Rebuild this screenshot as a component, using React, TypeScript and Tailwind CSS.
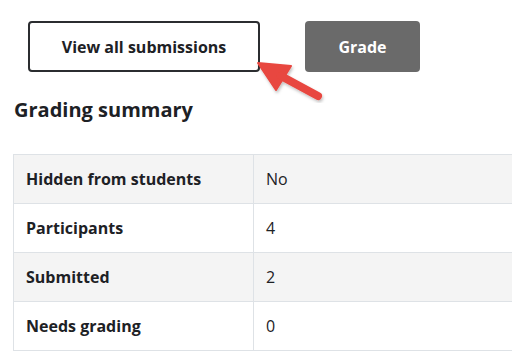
const rows = [
    { label: 'Hidden from students', value: 'No', shaded: true },
    { label: 'Participants', value: '4', shaded: false },
    { label: 'Submitted', value: '2', shaded: true },
    { label: 'Needs grading', value: '0', shaded: false },
];

function Arrow() {
    return (
        <svg className="absolute left-[250px] top-[55px]" width="80" height="55" viewBox="250 55 80 55">
            <defs>
                <filter id="sh" x="-20%" y="-20%" width="140%" height="140%">
                    <feDropShadow dx="1" dy="2" stdDeviation="1.5" floodColor="#000" floodOpacity="0.25" />
                </filter>
            </defs>
            <g filter="url(#sh)" fill="#e8473f" stroke="#e8473f" strokeLinejoin="round" strokeLinecap="round">
                <polygon points="258,63 291,66 276,90" strokeWidth="2" />
                <line x1="281" y1="76" x2="318" y2="96" strokeWidth="8" />
            </g>
        </svg>
    );
}

export default function App() {
    return (
        <div className="relative w-[512px] h-[351px] overflow-hidden bg-white font-['Open_Sans',sans-serif] text-[#1d2125]">
            <div className="flex gap-[45px] pl-[28px] pt-[21px]">
                <button className="w-[232px] h-[51px] border-2 border-[#2b2d30] rounded-[4px] bg-white text-[16px] font-bold text-[#1d2125]">
                    View all submissions
                </button>
                <button className="w-[115px] h-[51px] rounded-[4px] bg-[#6a6a6a] text-[16px] font-bold text-white">
                    Grade
                </button>
            </div>
            <h2 className="mt-[25px] ml-[14px] text-[20px] leading-[26px] font-bold">Grading summary</h2>
            <table className="mt-[31px] ml-[13px] w-[540px] border-collapse text-[16px]">
                <tbody>
                    {rows.map((row) => (
                        <tr key={row.label} className={row.shaded ? 'bg-[#f4f4f4]' : 'bg-white'}>
                            <th className="w-[240px] h-[49px] border border-[#dee2e6] px-[12px] text-left font-bold">
                                {row.label}
                            </th>
                            <td className="h-[49px] border border-[#dee2e6] px-[12px] text-left font-normal">
                                {row.value}
                            </td>
                        </tr>
                    ))}
                </tbody>
            </table>
            <Arrow />
        </div>
    );
}
